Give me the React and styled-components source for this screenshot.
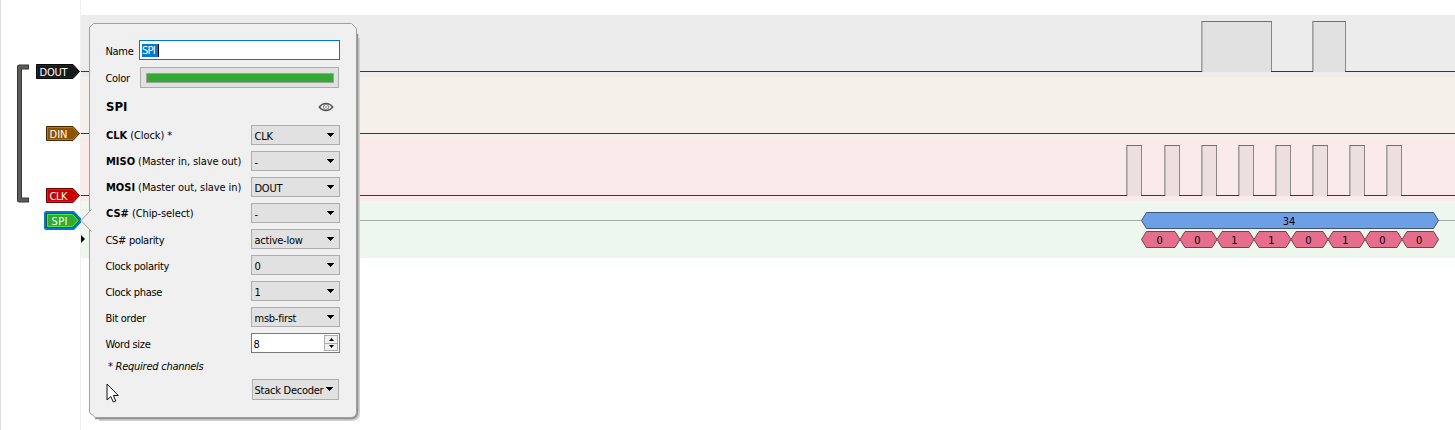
import React from "react";
import styled, { createGlobalStyle, css } from "styled-components";

const GlobalStyle = createGlobalStyle`
  body { margin: 0; background: #fff; overflow: hidden; }
  * { box-sizing: border-box; }
`;

const Window = styled.div`
  position: relative;
  display: flex;
  width: 1455px;
  height: 430px;
  background: #fff;
  border-left: 1px solid #dcdcdc;
  font-family: "DejaVu Sans Condensed", "DejaVu Sans", sans-serif;
  font-stretch: condensed;
  font-size: 11px;
  color: #000;
`;

const Header = styled.aside`
  display: flex;
  width: 80px;
  padding-top: 64px;
  border-right: 1px solid #f0f0f0;
`;

const Group = styled.svg`
  flex: none;
  width: 13px;
  height: 139px;
  margin-left: 15px;
`;

const Tags = styled.div`
  flex: 1;
  display: flex;
  flex-direction: column;
  align-items: flex-end;
`;

const TagBox = styled.svg`
  display: block;
  flex: none;
  width: ${(p) => p.$w}px;
  height: 20px;
  margin-top: ${(p) => p.$gap}px;
  overflow: visible;
`;

const Traces = styled.main`
  flex: 1;
  padding-top: 15px;
`;

const Band = styled.section`
  height: ${(p) => p.$h}px;
  background: ${(p) => p.$bg};
`;

const Plot = styled.svg`
  display: block;
  width: 1374px;
  height: 100%;
`;

const Popup = styled.div`
  position: absolute;
  left: 78px;
  top: 22px;
  width: 284px;
  height: 402px;
`;

const PopupShape = styled.svg`
  position: absolute;
  inset: 0;
`;

const Form = styled.div`
  position: relative;
  display: flex;
  flex-direction: column;
  padding: 18px 23px 0 27px;
  width: 284px;
`;

const Row = styled.div`
  display: flex;
  align-items: center;
  justify-content: space-between;
  height: ${(p) => p.$h || 20}px;
  margin-bottom: ${(p) => (p.$gap === undefined ? 6 : p.$gap)}px;
  padding-right: ${(p) => p.$inset || 0}px;
`;

const Label = styled.label`
  white-space: nowrap;
  line-height: 14px;
  padding-top: ${(p) => (p.$channel ? 1 : 3)}px;
  margin-left: ${(p) => (p.$channel ? 0 : -0.5)}px;
  letter-spacing: ${(p) => (p.$channel ? -0.1 : -0.3)}px;
  b { letter-spacing: 0; }
`;

const Heading = styled.h2`
  margin: 0;
  font-size: 13px;
  line-height: 16px;
  font-weight: bold;
`;

const Hint = styled.em`
  margin-left: 2px;
  letter-spacing: -0.25px;
`;

const NameInput = styled.div`
  width: 201px;
  height: 20px;
  padding: 3px 2px;
  background: #fff;
  border: 1px solid #0078d7;
  line-height: 14px;
`;

const Selection = styled.span`
  display: block;
  width: 17px;
  height: 13px;
  color: #fff;
  background: #0078d7;
  border-right: 1px solid #000;
  letter-spacing: -0.7px;
`;

const face = css`
  background: #e1e1e1;
  border: 1px solid #adadad;
`;

const ColorButton = styled.div`
  ${face}
  width: 199px;
  height: 21px;
  padding: 5px;
`;

const Swatch = styled.div`
  height: 10px;
  margin-right: -1px;
  background: #33aa33;
  border: 1px solid #a0a0a0;
`;

const Combo = styled.div`
  ${face}
  display: flex;
  align-items: center;
  justify-content: space-between;
  width: ${(p) => p.$w || 89}px;
  height: ${(p) => p.$h || 20}px;
  padding: 0 5px 0 ${(p) => p.$pad || 2.5}px;
  line-height: 14px;
  white-space: nowrap;
  letter-spacing: -0.25px;
`;

const Value = styled.span`
  padding-top: 3px;
`;

const Caret = styled.svg`
  width: 7px;
  height: 4px;
  margin-bottom: 1px;
  flex: none;
`;

const Spin = styled.div`
  display: flex;
  align-items: center;
  justify-content: space-between;
  width: 89px;
  height: 20px;
  padding: 0 1px 0 1.5px;
  background: #fff;
  border: 1px solid #7a7a7a;
`;

const SpinButtons = styled.div`
  display: flex;
  flex-direction: column;
  width: 14px;
  height: 16px;
`;

const SpinButton = styled.div`
  flex: 1;
  display: flex;
  align-items: center;
  justify-content: center;
  background: #f0f0f0;
  border: 1px solid #acacac;
  & + & { border-top: 0; }
`;

const Pointer = styled.svg`
  width: 13px;
  height: 20px;
  margin: 6px 0 0 0;
`;

function Tag({ label, w, gap, fill, edge, light, tw, tx = 3.5, selected }) {
  const shape = `M.5 3.5H${w - 7}L${w - 0.5} 10.5L${w - 7} 17.5H.5Z`;
  return (
    <TagBox $w={w} $gap={gap} viewBox={`0 0 ${w} 20`}>
      {selected && <path d={shape} fill="none" stroke="#0078d7" strokeWidth="5" strokeLinejoin="round" />}
      <path d={shape} fill={fill} stroke={edge} />
      <path d={`M1.5 4.5H${w - 7.4}L${w - 2} 10.5L${w - 7.4} 16.5H1.5Z`} fill="none" stroke={light} />
      <text x={tx} y="15" fontSize="11" fill="#fff" textLength={tw}>{label}</text>
    </TagBox>
  );
}

// Pulse positions are in pixels from the left edge of the trace area.
function Wave({ pulses, top, base, fill }) {
  const lows = [];
  let x = 0;
  pulses.forEach(([a, b]) => {
    lows.push([x, a + 1]);
    x = b - 1;
  });
  lows.push([x, 1374]);
  return (
    <Plot>
      {pulses.map(([a, b]) => (
        <g key={a} shapeRendering="crispEdges">
          <rect x={a} y={top} width={b - a} height={base - top + 1} fill={fill} />
          <rect x={a} y={top} width="1" height={base - top + 1} fill="#a3a0a0" />
          <rect x={a + 1} y={top} width="1" height={base - top + 1} fill="#bdb8b8" />
          <rect x={b - 1} y={top} width="1" height={base - top + 1} fill="#8a8787" />
          <rect x={a + 1} y={top} width={b - a - 1} height="1" fill="#00c000" />
        </g>
      ))}
      {lows.map(([a, b]) => (
        <rect key={a} x={a} y={base} width={b - a} height="1" fill="#c00000" />
      ))}
    </Plot>
  );
}

function Annotation({ a, b, y, fill, edge, children }) {
  return (
    <g>
      <path
        d={`M${a} ${y + 8}L${a + 5} ${y}H${b - 5}L${b} ${y + 8}L${b - 5} ${y + 16}H${a + 5}Z`}
        fill={fill}
        stroke={edge}
      />
      <text x={(a + b) / 2 - 1} y={y + 12.5} fontSize="11" textAnchor="middle">{children}</text>
    </g>
  );
}

const bitEdges = [1060.5, 1099, 1136, 1173, 1210, 1247, 1284, 1321, 1357.5];
const bits = ["0", "0", "1", "1", "0", "1", "0", "0"];
const clockPulses = [
  [1045, 1061], [1083, 1099], [1120, 1136], [1157, 1173],
  [1194, 1210], [1231, 1247], [1268, 1284], [1305, 1321],
];

const options = [
  { bold: "CLK", text: " (Clock) *", value: "CLK" },
  { bold: "MISO", text: " (Master in, slave out)", value: "-" },
  { bold: "MOSI", text: " (Master out, slave in)", value: "DOUT" },
  { bold: "CS#", text: " (Chip-select)", value: "-" },
  { text: "CS# polarity", value: "active-low" },
  { text: "Clock polarity", value: "0" },
  { text: "Clock phase", value: "1" },
  { text: "Bit order", value: "msb-first" },
];

const Down = () => (
  <Caret viewBox="0 0 7 4" shapeRendering="crispEdges"><path d="M0 0H7V1H6V2H5V3H4V4H3V3H2V2H1V1H0Z" /></Caret>
);

export default function App() {
  return (
    <Window>
      <GlobalStyle />
      <Header>
        <Group viewBox="0 0 13 139">
          <path d="M13 3H3.5V136H13" fill="none" stroke="#353735" strokeWidth="5" strokeLinejoin="round" />
          <path d="M12 3H3.5V136H12" fill="none" stroke="#5b5d5b" strokeWidth="3" strokeLinejoin="round" />
        </Group>
        <Tags>
          <Tag label="DOUT" w={44} gap={-3} tw={28} fill="#16191a" edge="#050606" light="#202526" />
          <Tag label="DIN" w={34} gap={42} tw={18} fill="#8f5202" edge="#482901" light="#c77203" />
          <Tag label="CLK" w={34} gap={42} tw={18} fill="#cc0000" edge="#660000" light="#f01818" />
          <Tag label="SPI" w={34} gap={5} tw={16} tx={5.5} fill="#33aa33" edge="#1a551a" light="#47ee47" selected />
        </Tags>
      </Header>

      <Traces>
        <Band $h={62} $bg="#ececec">
          <Wave top={6} base={56} fill="#e1e1e1" pulses={[[1120, 1191], [1231, 1265]]} />
        </Band>
        <Band $h={62} $bg="#f5f0e9">
          <Wave top={6} base={56} fill="#e9e4dd" pulses={[]} />
        </Band>
        <Band $h={62} $bg="#fbeaea">
          <Wave top={6} base={56} fill="#eddfde" pulses={clockPulses} />
        </Band>
        <Band $h={57} $bg="#eef7ee">
          <Plot>
            <path d="M0 19.5H1060M1358 19.5H1374" stroke="#a3aba3" />
            <path d="M0 34V42L4 38Z" fill="#000" />
            <Annotation a={1060.5} b={1357.5} y={11.5} fill="#6e9fe5" edge="#3c577d">34</Annotation>
            {bits.map((bit, i) => (
              <Annotation key={i} a={bitEdges[i]} b={bitEdges[i + 1]} y={30.5} fill="#e66e8d" edge="#7d3c4d">
                {bit}
              </Annotation>
            ))}
          </Plot>
        </Band>
      </Traces>

      <Popup>
        <PopupShape width="284" height="402">
          <path d="M20 397.500H273Q279.500 397.500 279.500 391V16" fill="none" stroke="#d0d0d0" strokeWidth="3" />
          <path d="M16 396H272Q278 396 278 389V12" fill="none" stroke="#8e8e8e" strokeWidth="2.5" />
          <path
            d="M14.500 1.500H272.500L277.500 6.500V389.500Q277.500 395.500 271.500 395.500H16.500L10.500 390.500V209.500L1.500 198.500L10.500 188.500V5.500Z"
            fill="#f0f0f0"
          />
          <path
            d="M12.500 209.500L2 198.500L12.500 187.500M10.500 189.500V5.500L14.500 1.500H272.500L277.500 6.500V389.500Q277.500 395.500 271.500 395.500H16.500L10.500 390.500V207.500"
            fill="none"
            stroke="#a0a0a0"
          />
        </PopupShape>
        <Form>
          <Row $gap={7}>
            <Label>Name</Label>
            <NameInput><Selection>SPI</Selection></NameInput>
          </Row>
          <Row $h={21} $gap={10} $inset={1}>
            <Label>Color</Label>
            <ColorButton><Swatch /></ColorButton>
          </Row>
          <Row $h={18} $gap={9} $inset={6}>
            <Heading>SPI</Heading>
            <svg width="16" height="10" viewBox="0 0 16 10">
              <path d="M1.300 5Q4 1.500 8 1.500T14.700 5Q12 8.500 8 8.500T1.300 5Z" fill="#e8e8e8" stroke="#555" strokeWidth="1.500" />
              <circle cx="8" cy="5" r="2.500" fill="#fff" stroke="#777" />
              <circle cx="8" cy="5" r="0.800" fill="#555" />
            </svg>
          </Row>
          {options.map(({ bold, text, value }) => (
            <Row key={bold || text}>
              <Label $channel={Boolean(bold)}>{bold && <b>{bold}</b>}{text}</Label>
              <Combo><Value>{value}</Value><Down /></Combo>
            </Row>
          ))}
          <Row>
            <Label>Word size</Label>
            <Spin>
              <Value>8</Value>
              <SpinButtons>
                <SpinButton><svg width="5" height="3"><path d="M0 3L2.500 0L5 3Z" /></svg></SpinButton>
                <SpinButton><svg width="5" height="3"><path d="M0 0L2.500 3L5 0Z" /></svg></SpinButton>
              </SpinButtons>
            </Spin>
          </Row>
          <Row $h={14}><Hint>* Required channels</Hint></Row>
          <Row $h={21} $gap={0} $inset={1}>
            <Pointer viewBox="0 0 13 20">
              <path d="M1 1V17L4.800 13.500L7.300 19L9.800 18L7.400 12.500H12.300Z" fill="#fff" stroke="#111" />
            </Pointer>
            <Combo $w={87} $h={21} $pad={1.5}><Value>Stack Decoder</Value><Down /></Combo>
          </Row>
        </Form>
      </Popup>
    </Window>
  );
}
